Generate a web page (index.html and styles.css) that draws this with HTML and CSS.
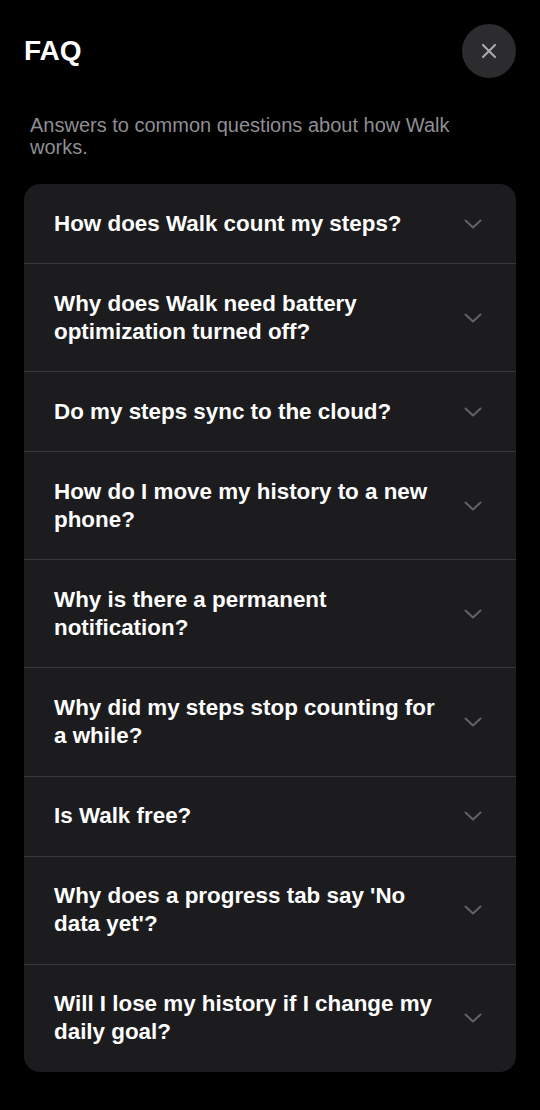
FILE: index.html
```html
<!DOCTYPE html>
<html lang="en">
<head>
<meta charset="utf-8">
<title>FAQ</title>
<link rel="stylesheet" href="styles.css">
</head>
<body>
<main class="page">
  <header class="header">
    <h1 class="title">FAQ</h1>
    <button class="close" aria-label="Close">
      <svg width="16" height="16" viewBox="0 0 16 16"><path d="M2 2L14 14M14 2L2 14" stroke="#a8a8ad" stroke-width="2.2" stroke-linecap="round" fill="none"/></svg>
    </button>
  </header>
  <p class="subtitle">Answers to common questions about how Walk works.</p>
  <section class="card">
    <div class="row"><span class="q">How does Walk count my steps?</span><svg class="chev" width="18" height="10" viewBox="0 0 18 10"><path d="M1.5 1.5L9 8.5L16.5 1.5" /></svg></div>
    <div class="row"><span class="q">Why does Walk need battery optimization turned off?</span><svg class="chev" width="18" height="10" viewBox="0 0 18 10"><path d="M1.5 1.5L9 8.5L16.5 1.5" /></svg></div>
    <div class="row"><span class="q">Do my steps sync to the cloud?</span><svg class="chev" width="18" height="10" viewBox="0 0 18 10"><path d="M1.5 1.5L9 8.5L16.5 1.5" /></svg></div>
    <div class="row"><span class="q">How do I move my history to a new phone?</span><svg class="chev" width="18" height="10" viewBox="0 0 18 10"><path d="M1.5 1.5L9 8.5L16.5 1.5" /></svg></div>
    <div class="row"><span class="q">Why is there a permanent notification?</span><svg class="chev" width="18" height="10" viewBox="0 0 18 10"><path d="M1.5 1.5L9 8.5L16.5 1.5" /></svg></div>
    <div class="row"><span class="q">Why did my steps stop counting for a while?</span><svg class="chev" width="18" height="10" viewBox="0 0 18 10"><path d="M1.5 1.5L9 8.5L16.5 1.5" /></svg></div>
    <div class="row"><span class="q">Is Walk free?</span><svg class="chev" width="18" height="10" viewBox="0 0 18 10"><path d="M1.5 1.5L9 8.5L16.5 1.5" /></svg></div>
    <div class="row"><span class="q">Why does a progress tab say 'No data yet'?</span><svg class="chev" width="18" height="10" viewBox="0 0 18 10"><path d="M1.5 1.5L9 8.5L16.5 1.5" /></svg></div>
    <div class="row"><span class="q">Will I lose my history if I change my daily goal?</span><svg class="chev" width="18" height="10" viewBox="0 0 18 10"><path d="M1.5 1.5L9 8.5L16.5 1.5" /></svg></div>
  </section>
</main>
</body>
</html>
```

FILE: styles.css
```css
html, body {
  margin: 0;
  padding: 0;
  background: #000;
}
body {
  font-family: "Liberation Sans", Arial, sans-serif;
  color: #fff;
}
.page {
  padding: 24px 24px 24px;
}
.header {
  display: flex;
  justify-content: space-between;
  align-items: center;
  height: 54px;
}
.title {
  margin: 0;
  font-size: 28px;
  font-weight: 700;
  line-height: 34px;
  color: #fff;
}
.close {
  width: 54px;
  height: 54px;
  border-radius: 50%;
  border: 0;
  padding: 0;
  background: #2c2c2e;
  display: flex;
  align-items: center;
  justify-content: center;
}
.subtitle {
  margin: 36px 6px 26px 6px;
  font-size: 20px;
  line-height: 22px;
  color: #8e8e93;
}
.card {
  background: #1c1c1e;
  border-radius: 16px;
  overflow: hidden;
}
.row {
  display: flex;
  align-items: center;
  gap: 20px;
  padding: 25.56px 34px 25.56px 30px;
  border-bottom: 1px solid #38383a;
}
.row:last-child {
  border-bottom: 0;
}
.q {
  flex: 1;
  font-size: 22.4px;
  font-weight: 700;
  line-height: 28px;
  color: #fff;
}
.chev {
  flex: none;
}
.chev path {
  fill: none;
  stroke: #636366;
  stroke-width: 2;
  stroke-linecap: round;
  stroke-linejoin: round;
}
```
